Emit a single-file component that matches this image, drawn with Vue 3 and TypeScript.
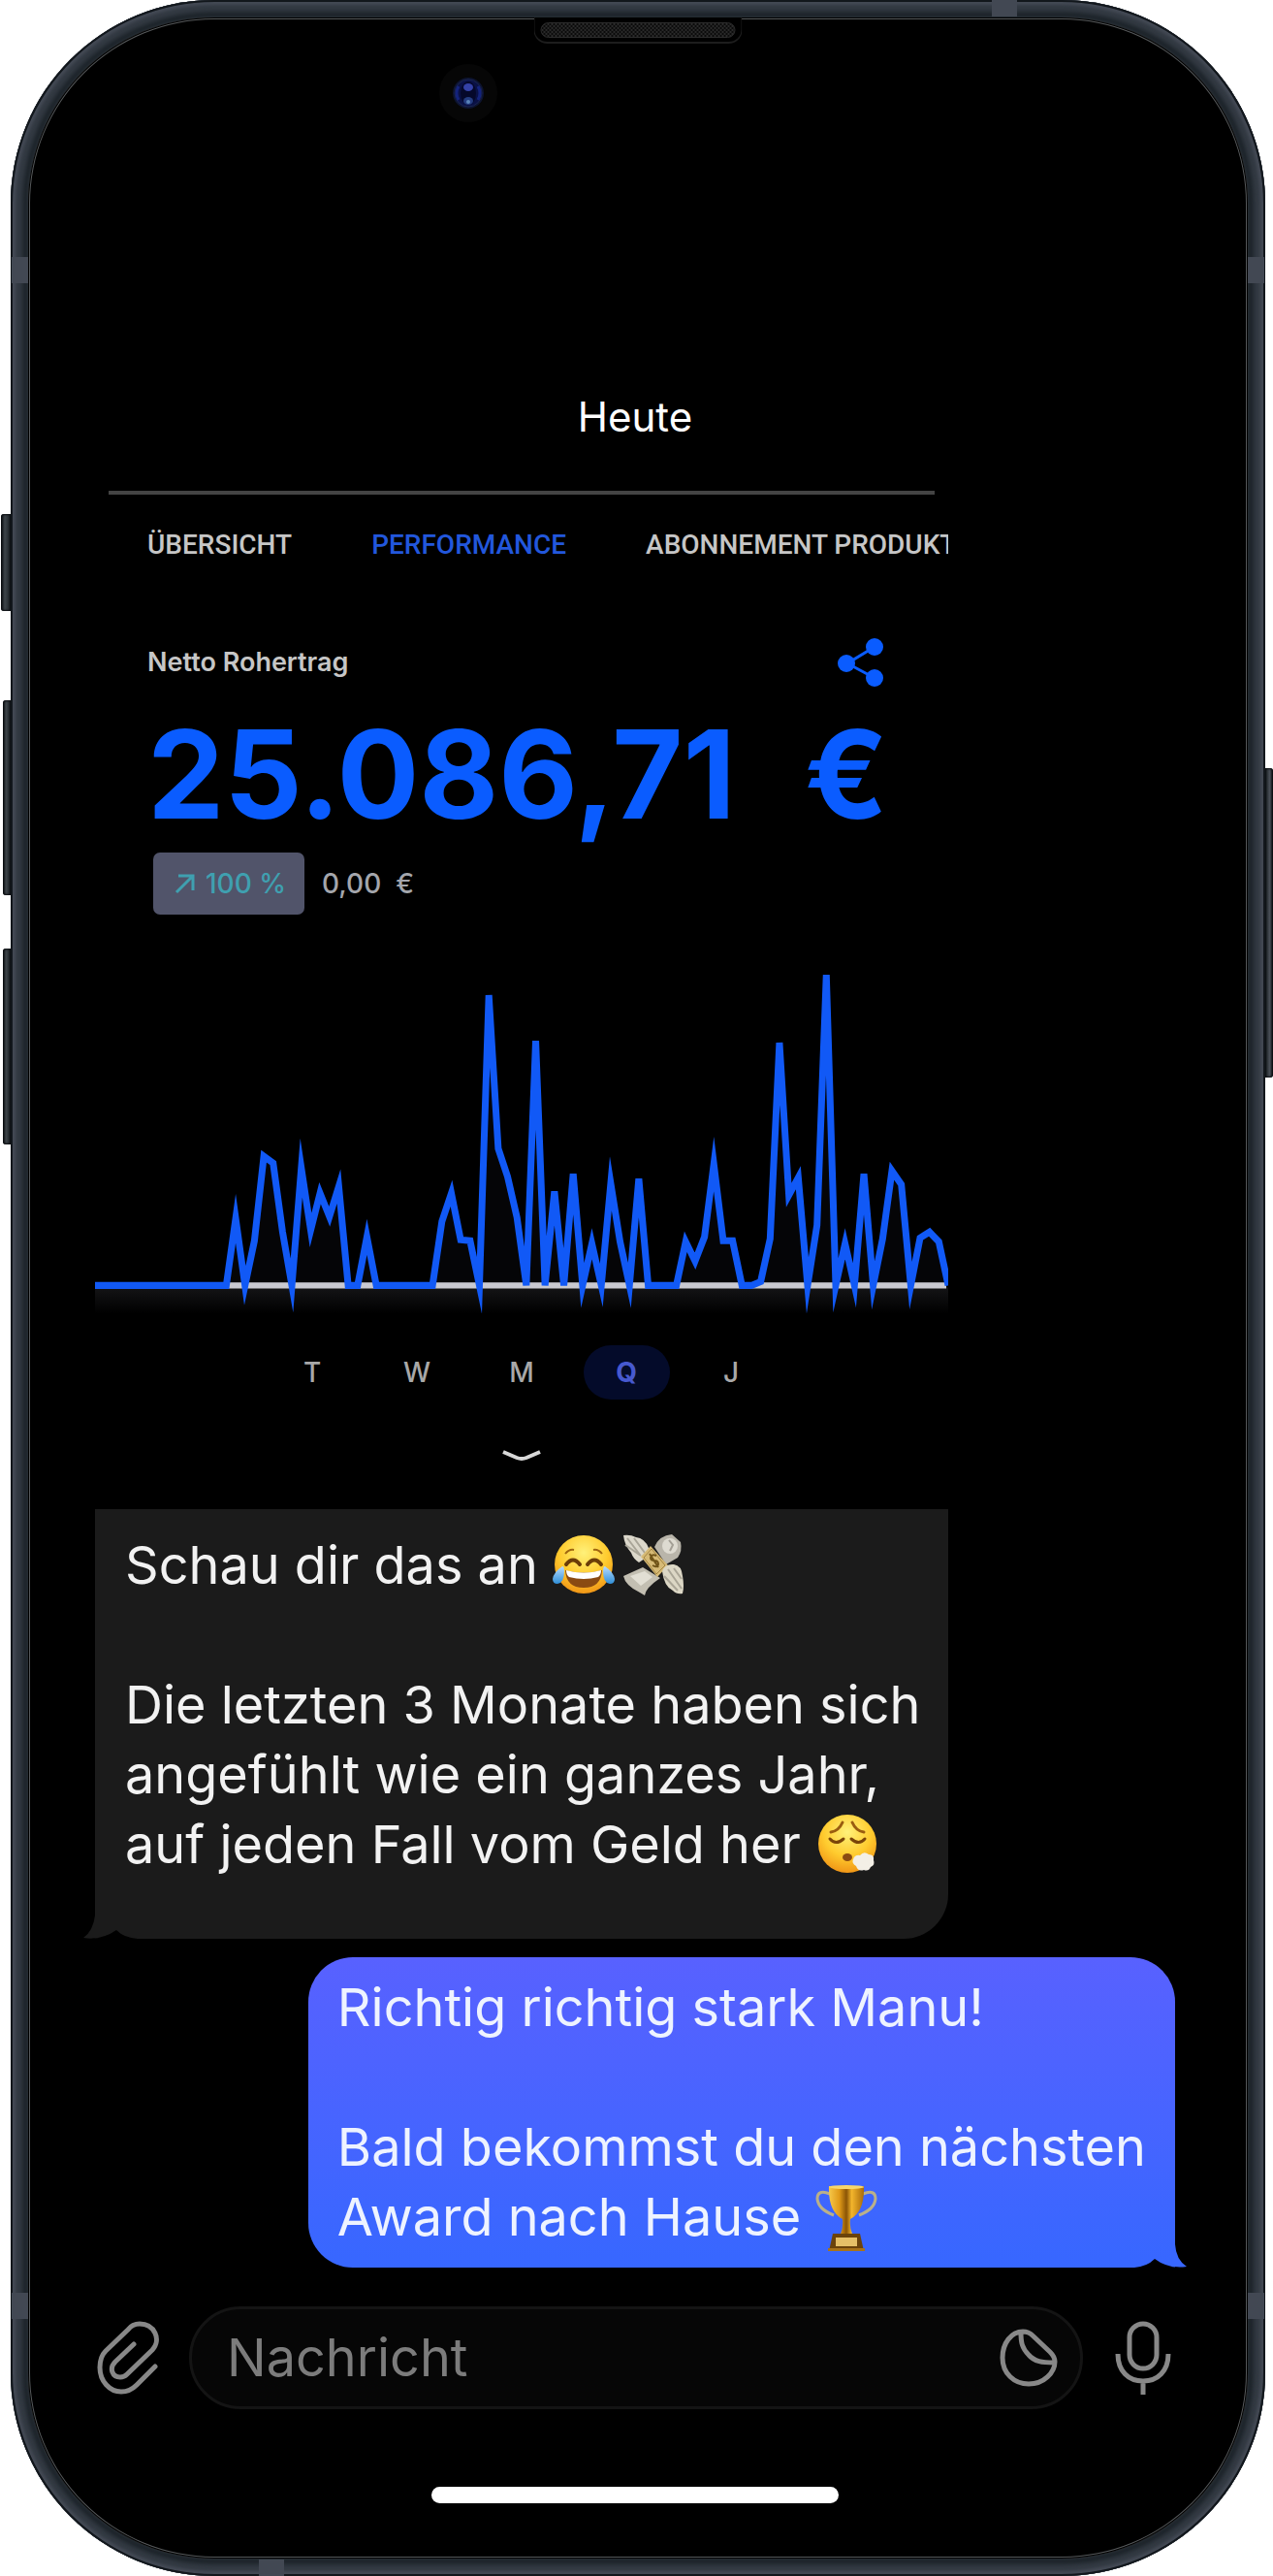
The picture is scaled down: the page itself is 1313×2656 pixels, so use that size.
<script setup lang="ts">
import { computed, ref } from 'vue'

const tabs = ['ÜBERSICHT', 'PERFORMANCE', 'ABONNEMENT PRODUKT']
const activeTab = ref('PERFORMANCE')

const periods = ['T', 'W', 'M', 'Q', 'J']
const activePeriod = ref('Q')

const draft = ref('')

// Daily gross profit over one quarter, in chart units above the zero line
const days: number[] = [
  0, 0, 0, 0, 0, 0, 0, 0, 0, 0, 0, 0, 0, 0, 0, 69, 0, 46, 133, 126, 55, 0, 121, 57, 95, 71, 102, 0, 0, 50,
  0, 0, 0, 0, 0, 0, 0, 66, 95, 47, 46, 0, 299, 141, 112, 70, 0, 252, 0, 97, 0, 115, 0, 43, 0, 105, 45, 0,
  110, 0, 0, 0, 0, 45, 25, 50, 125, 46, 46, 0, 0, 4, 48, 250, 93, 111, 0, 62, 320, 0, 43, 0, 115, 0, 48,
  118, 104, 0, 49, 55, 45, 0,
]
const chartWidth = 879
const zeroLine = 325

const linePoints = computed(() =>
  days.map((v, i) => `${((i * chartWidth) / (days.length - 1)).toFixed(1)},${zeroLine - v}`).join(' '),
)
</script>

<template>
  <main class="stage">
    <div class="phone">
      <i class="key key-mute"></i>
      <i class="key key-up"></i>
      <i class="key key-down"></i>
      <i class="key key-power"></i>
      <i class="band band-lt"></i>
      <i class="band band-rt"></i>
      <i class="band band-lb"></i>
      <i class="band band-rb"></i>
      <i class="band band-top"></i>
      <i class="band band-bottom"></i>

      <div class="screen">
        <div class="speaker"><i class="grille"></i></div>
        <svg class="camera" viewBox="0 0 60 60" aria-hidden="true">
          <circle cx="30" cy="30" r="30" fill="#060606" />
          <circle cx="30" cy="30" r="16" fill="#0d1430" />
          <circle cx="30" cy="30" r="14" fill="#0a1145" stroke="#1a2450" stroke-width="1" />
          <ellipse cx="30" cy="30" rx="8" ry="12" fill="#05082a" />
          <path d="M20 23q-4 7 0 14M40 23q4 7 0 14" stroke="#14237c" stroke-width="3" fill="none" />
          <ellipse cx="30" cy="24" rx="5" ry="4" fill="#3441a6" />
          <ellipse cx="30" cy="38" rx="5" ry="4" fill="#243c80" />
          <circle cx="30" cy="39" r="2" fill="#5a83b8" />
        </svg>

        <h1 class="day">Heute</h1>

        <section class="card">
          <hr class="rule" />
          <nav class="tabs">
            <button
              v-for="tab in tabs"
              :key="tab"
              type="button"
              class="tab"
              :class="{ active: tab === activeTab }"
              @click="activeTab = tab"
            >{{ tab }}</button>
          </nav>

          <div class="metric-head">
            <h2>Netto Rohertrag</h2>
            <button type="button" class="icon-button" aria-label="Teilen">
              <svg class="share" viewBox="0 0 48 52">
                <path d="M38 10 10 27 38 42" fill="none" stroke="#0a5cff" stroke-width="3" />
                <circle cx="38" cy="10" r="9" fill="#0a5cff" />
                <circle cx="9" cy="27" r="9" fill="#0a5cff" />
                <circle cx="38" cy="42" r="9" fill="#0a5cff" />
              </svg>
            </button>
          </div>
          <p class="amount"><span>25.086,71</span> <span>€</span></p>
          <div class="delta">
            <span class="badge">
              <svg class="arrow" viewBox="0 0 22 22" aria-hidden="true">
                <path d="M2 20 19 3M4 3h15v15" fill="none" stroke="#3fa0b0" stroke-width="3" />
              </svg>
              100 %
            </span>
            <span class="change">0,00&nbsp; €</span>
          </div>

          <svg class="chart" viewBox="0 0 879 354" role="img" aria-label="Rohertrag im Quartal">
            <defs>
              <linearGradient id="fade" x1="0" y1="0" x2="0" y2="1">
                <stop offset="0" stop-color="#141416" />
                <stop offset="1" stop-color="#000" />
              </linearGradient>
            </defs>
            <polygon :points="linePoints" fill="#050507" />
            <rect x="0" y="327" width="879" height="27" fill="url(#fade)" />
            <path d="M0 325H877" stroke="#c9c9d0" stroke-width="6" />
            <polyline :points="linePoints" fill="none" stroke="#1159f6" stroke-width="7" stroke-miterlimit="10" />
          </svg>

          <div class="periods">
            <button
              v-for="p in periods"
              :key="p"
              type="button"
              class="period"
              :class="{ active: p === activePeriod }"
              @click="activePeriod = p"
            >{{ p }}</button>
          </div>
          <button type="button" class="more" aria-label="Mehr anzeigen">
            <svg class="chevron" viewBox="0 0 42 16">
              <path d="M2 3 16 9Q21 11 26 9L40 3" fill="none" stroke="#d8d8d8" stroke-width="4" />
            </svg>
          </button>
        </section>

        <article class="bubble incoming">
          <p>
            Schau dir das an
            <svg class="emoji" viewBox="0 0 64 64" role="img" aria-label="Freudentränen">
              <defs>
                <radialGradient id="face" cx=".5" cy=".3" r=".75">
                  <stop offset="0" stop-color="#fff17a" />
                  <stop offset=".55" stop-color="#ffcb2e" />
                  <stop offset="1" stop-color="#ee8d12" />
                </radialGradient>
                <linearGradient id="tear" x1="0" y1="0" x2="0" y2="1">
                  <stop offset="0" stop-color="#b8dcff" />
                  <stop offset="1" stop-color="#2f8fd8" />
                </linearGradient>
              </defs>
              <circle cx="32" cy="32" r="30" fill="url(#face)" />
              <path d="M13 21q4-5 9-4M51 21q-4-5-9-4" stroke="#a0660f" stroke-width="2" fill="none" />
              <path d="M14 32q7-9 14 0M36 32q7-9 14 0" stroke="#6b3d08" stroke-width="4" fill="none" stroke-linecap="round" />
              <path d="M13 38q19 5 38 0-1 18-19 18T13 38Z" fill="#8a4a12" />
              <path d="M14 38q18 5 36 0 0 5-3 7-15 4-30 0-3-2-3-7Z" fill="#fff" />
              <path d="M10 34q2 0 2 5 0 12-7 13-5 0-5-5 1-7 10-13ZM54 34q-2 0-2 5 0 12 7 13 5 0 5-5-1-7-10-13Z" fill="url(#tear)" />
            </svg>
            <svg class="emoji next" viewBox="0 0 64 64" role="img" aria-label="Geld mit Flügeln">
              <path d="M33 14Q38 2 51 1l9 8q2 9-3 16l-12 7Z" fill="#b9b5aa" />
              <circle cx="49" cy="13" r="8" fill="#dedbd1" />
              <path d="M48 7l4 5-3 6" fill="none" stroke="#a39f95" stroke-width="2" />
              <path d="M1 2q7-1 13 2 9 1 13 11l2 7-12 8q-6-4-8-10Q2 12 1 2Z" fill="#dcd8cb" />
              <path d="M5 5l13 17M12 5l11 15M3 12l16 11" stroke="#a9a598" stroke-width="2" />
              <path d="M21 35 1 44q2 10 17 17l5 3q1-8 16-18Z" fill="#c3bfb2" />
              <path d="M8 44l15-5 8 6-12 9Z" fill="#e2dfd4" />
              <path d="M19 24 29 13 47 33 36 45Z" fill="#d6ba76" />
              <path d="m22 25 8-9 14 17-9 9Z" fill="none" stroke="#a58642" stroke-width="1" />
              <path d="M35 23q-5-2-6 2 0 3 4 3t4 4q-1 4-6 1M28 21l9 14" fill="none" stroke="#705418" stroke-width="2" />
              <path d="M41 39q3-8 12-7 8 1 9 12 2 11 0 18-6 1-10-3-9-4-11-20Z" fill="#dcd7c5" />
              <path d="M47 37l14 20M53 36l8 11M43 44l14 15" stroke="#aaa596" stroke-width="2" />
            </svg>
            <br /><br />
            Die letzten 3 Monate haben sich<br />
            angefühlt wie ein ganzes Jahr,<br />
            auf jeden Fall vom Geld her
            <svg class="emoji" viewBox="0 0 64 64" role="img" aria-label="Ausatmen">
              <circle cx="33" cy="32" r="30" fill="url(#face)" />
              <path d="M16 20q8-1 12-10M50 20q-8-1-12-10" stroke="#9a5d10" stroke-width="3" fill="none" stroke-linecap="round" />
              <path d="M15 27q6 7 14 0M37 27q8 7 14 0" stroke="#7a4509" stroke-width="3" fill="none" stroke-linecap="round" />
              <ellipse cx="33" cy="46" rx="5" ry="4" fill="#8a4a12" />
              <path d="M39 48q2-5 7-4 4-5 9-1 6 0 5 6 2 5-3 7-2 5-7 3-6 2-8-4-5-3-3-7Z" fill="#f3efe6" />
            </svg>
          </p>
          <svg class="tail tail-left" viewBox="0 0 56 44" aria-hidden="true">
            <path d="M0 43Q10 36 12 20V44H34V35Q20 46 0 43Z" fill="#1b1b1b" />
            <path d="M0 44Q20 45 34 35 42 43 56 44Z" fill="#000" />
          </svg>
        </article>

        <article class="bubble outgoing">
          <p>
            Richtig richtig stark Manu!<br /><br />
            Bald bekommst du den nächsten<br />
            Award nach Hause
            <svg class="emoji trophy" viewBox="0 0 64 68" role="img" aria-label="Pokal">
              <defs>
                <linearGradient id="gold" x1="0" y1="0" x2="1" y2="0">
                  <stop offset="0" stop-color="#f6c84a" />
                  <stop offset=".3" stop-color="#e09a18" />
                  <stop offset=".5" stop-color="#8a5406" />
                  <stop offset=".65" stop-color="#f3b52c" />
                  <stop offset="1" stop-color="#a86a0a" />
                </linearGradient>
              </defs>
              <path d="M15 9Q2 4 2 14q1 11 17 17M49 9q13-5 13 5-1 11-17 17" fill="none" stroke="#b9b08a" stroke-width="3" />
              <path d="M14 1h36q1 26-14 34-1 8 2 15H26q3-7 2-15Q13 27 14 1Z" fill="url(#gold)" />
              <ellipse cx="32" cy="2" rx="18" ry="2" fill="#f8d76a" />
              <path d="M18 50h28l4 18H14Z" fill="#6b430b" />
              <path d="M21 54h22v9H21Z" fill="#e6c067" />
              <path d="M13 65h38v3H13Z" fill="#a8731a" />
            </svg>
          </p>
          <svg class="tail tail-right" viewBox="0 0 54 44" aria-hidden="true">
            <path d="M54 43Q43 36 42 20V44H21V34Q34 46 54 43Z" fill="#3867ff" />
            <path d="M54 44Q34 45 21 35 13 43 0 44Z" fill="#000" />
          </svg>
        </article>

        <form class="composer" @submit.prevent>
          <button type="button" class="icon-button" aria-label="Anhang">
            <svg class="clip" viewBox="0 0 64 76">
              <path
                d="M38 24 19 42C12 49 16 58 24 58c3 0 5-1 7-3L57 30C67 19 59 3 44 3c-5 0-9 2-12 6L9 31C5 35 3 41 3 48 3 62 13 73 25 73 31 73 36 71 41 66L60 47"
                fill="none" stroke="#888" stroke-width="5" stroke-linecap="round" stroke-linejoin="round"
              />
            </svg>
          </button>
          <div class="field">
            <input v-model="draft" type="text" placeholder="Nachricht" aria-label="Nachricht" />
            <button type="button" class="icon-button" aria-label="Sticker">
              <svg class="sticker" viewBox="0 0 60 60">
                <path
                  d="M24 3C12 3 3 15 3 30c0 16 12 27 27 27 16 0 27-12 27-23 0-4-2-7-5-10L34 7c-3-3-6-4-10-4ZM22 4c0 10 1 16 8 23 6 7 14 8 26 8"
                  fill="none" stroke="#888" stroke-width="5" stroke-linejoin="round"
                />
              </svg>
            </button>
          </div>
          <button type="button" class="icon-button" aria-label="Sprachnachricht">
            <svg class="mic" viewBox="0 0 58 76">
              <rect x="15" y="3" width="28" height="46" rx="14" fill="none" stroke="#888" stroke-width="5" />
              <path d="M3 34c0 18 11 28 26 28s26-10 26-28M29 62v14" fill="none" stroke="#888" stroke-width="5" />
            </svg>
          </button>
        </form>

        <div class="home-bar"></div>
      </div>
    </div>
  </main>
</template>

<style>
body {
  margin: 0;
  background: #fff;
}
</style>

<style scoped>
* {
  box-sizing: border-box;
}

h1,
h2,
p,
hr {
  margin: 0;
  border: 0;
  font-weight: 400;
}

button {
  padding: 0;
  border: 0;
  background: none;
  color: inherit;
  font: inherit;
  cursor: pointer;
}

svg {
  display: block;
}

.stage {
  padding: 0 8px 0 11px;
  font-family: Inter, "Liberation Sans", sans-serif;
  color: #fff;
}

.phone {
  position: relative;
  padding: 18px;
  border-radius: 210px;
  background: #2b3239;
  box-shadow:
    inset 0 0 0 2px #12171c,
    inset 0 0 3px 5px #434954,
    inset 0 0 5px 12px #343b44,
    inset 0 0 3px 17px #1c2329;
}

.key {
  position: absolute;
  left: -8px;
  width: 8px;
  border-radius: 3px 0 0 3px;
  background: linear-gradient(90deg, #0c1013, #3d4449 40%, #1c2226);
  box-shadow: inset 0 0 2px 1px #0a0d10;
}

.key-mute {
  top: 530px;
  left: -10px;
  width: 10px;
  height: 100px;
}

.key-up {
  top: 722px;
  height: 201px;
}

.key-down {
  top: 978px;
  height: 202px;
}

.key-power {
  top: 792px;
  right: -8px;
  left: auto;
  height: 319px;
  border-radius: 0 3px 3px 0;
  background: linear-gradient(270deg, #0c1013, #4a5058 40%, #1c2226);
}

.band {
  position: absolute;
  width: 17px;
  height: 27px;
  background: #424853;
}

.band-lt {
  top: 265px;
  left: 1px;
}

.band-rt {
  top: 265px;
  right: 1px;
}

.band-lb {
  bottom: 265px;
  left: 1px;
}

.band-rb {
  right: 1px;
  bottom: 265px;
}

.band-top {
  top: 0;
  right: 256px;
  width: 26px;
  height: 17px;
}

.band-bottom {
  bottom: 0;
  left: 256px;
  width: 26px;
  height: 17px;
}

.screen {
  position: relative;
  display: flex;
  flex-direction: column;
  padding: 388px 75px 57px 69px;
  border-radius: 192px;
  background: #000;
  box-shadow:
    inset 0 0 0 1px #000,
    inset 0 0 0 2px #55585a;
}

.speaker {
  position: absolute;
  top: 0;
  left: 50%;
  width: 215px;
  height: 27px;
  padding: 5px 6px;
  border: solid #1d1d1d;
  border-width: 0 1px 2px;
  border-radius: 0 0 14px 14px;
  background: #000;
  transform: translateX(-50%);
}

.grille {
  display: block;
  height: 16px;
  border: 1px solid #2c2c2c;
  border-radius: 8px;
  background: repeating-conic-gradient(#2a2a2a 0 25%, #0b0b0b 0 50%) 0 0 / 4px 4px;
}

.camera {
  position: absolute;
  top: 48px;
  left: 424px;
  width: 60px;
  height: 60px;
}

.day {
  font-size: 42px;
  line-height: 48px;
  text-align: center;
}

.card {
  width: 79%;
  margin-top: 52px;
  overflow: hidden;
}

.rule {
  height: 4px;
  margin: 0 14px;
  background: #444;
}

.tabs {
  display: flex;
  gap: 82px;
  margin-top: 34px;
  padding-left: 54px;
}

.tab {
  flex: none;
  font-family: Roboto, "Noto Sans", sans-serif;
  font-size: 28px;
  font-weight: 500;
  line-height: 36px;
  color: #c6c6c6;
  white-space: nowrap;
}

.tab.active {
  color: #2257dc;
}

.metric-head {
  display: flex;
  align-items: center;
  justify-content: space-between;
  margin-top: 77px;
  padding: 0 66px 0 54px;
}

.metric-head h2 {
  font-size: 27px;
  font-weight: 600;
  line-height: 36px;
  color: #c6c6c6;
}

.share {
  width: 48px;
  height: 52px;
}

.amount {
  display: flex;
  justify-content: space-between;
  margin-top: 24px;
  padding: 0 62px 0 54px;
  font-size: 126px;
  font-weight: 700;
  line-height: 130px;
  color: #0a5cff;
  white-space: nowrap;
}

.delta {
  display: flex;
  gap: 18px;
  align-items: center;
  margin-top: 16px;
  padding-left: 60px;
  font-size: 28px;
  font-weight: 500;
  line-height: 64px;
}

.badge {
  display: flex;
  gap: 10px;
  align-items: center;
  padding: 0 19px 0 22px;
  border-radius: 7px;
  background: #51546a;
  color: #3fa0b0;
}

.arrow {
  width: 22px;
  height: 22px;
}

.change {
  color: #a4a6ac;
}

.chart {
  width: 100%;
  height: auto;
  margin-top: 57px;
}

.periods {
  display: flex;
  gap: 19px;
  justify-content: center;
  margin-top: 33px;
}

.period {
  width: 89px;
  border-radius: 28px;
  color: #a8a8a8;
  font-size: 28px;
  font-weight: 500;
  line-height: 56px;
  text-align: center;
}

.period.active {
  background: #040b2a;
  color: #4759cf;
  font-weight: 700;
}

.more {
  display: block;
  margin: 51px auto 0;
}

.chevron {
  width: 42px;
  height: 16px;
}

.bubble {
  position: relative;
  font-size: 54px;
  line-height: 72px;
  white-space: nowrap;
}

.incoming {
  width: 79%;
  margin-top: 46px;
  padding: 22px 31px 61px;
  border-radius: 0 0 46px 0;
  background: #1b1b1b;
  color: #f2f2f2;
}

.outgoing {
  align-self: flex-end;
  margin-top: 19px;
  padding: 16px 30px;
  border-radius: 46px 46px 0 46px;
  background: linear-gradient(#5861ff, #3767ff);
  color: #eef3ff;
}

.emoji {
  display: inline-block;
  width: 64px;
  height: 64px;
  vertical-align: -12px;
}

.emoji.next {
  margin-left: 8px;
}

.emoji.trophy {
  height: 68px;
  margin: -4px 0;
}

.tail {
  position: absolute;
  bottom: 0;
  height: 44px;
}

.tail-left {
  left: -12px;
  width: 56px;
}

.tail-right {
  right: -12px;
  width: 54px;
}

.composer {
  display: flex;
  align-items: center;
  justify-content: space-between;
  margin-top: 40px;
  padding: 0 4px 0 2px;
}

.clip {
  width: 64px;
  height: 76px;
}

.field {
  display: flex;
  flex: 1;
  align-items: center;
  min-width: 0;
  height: 106px;
  margin: 0 33px 0 31px;
  padding: 0 23px 0 36px;
  border: 3px solid #141414;
  border-radius: 53px;
  background: #060606;
}

.field input {
  flex: 1;
  min-width: 0;
  padding: 0;
  border: 0;
  outline: 0;
  background: none;
  color: #eee;
  font: inherit;
  font-size: 54px;
  line-height: 72px;
}

.field input::placeholder {
  color: #7c7c7c;
  opacity: 1;
}

.sticker {
  width: 60px;
  height: 60px;
}

.mic {
  width: 58px;
  height: 76px;
}

.home-bar {
  align-self: center;
  width: 420px;
  max-width: 60%;
  height: 17px;
  margin-top: 80px;
  border-radius: 9px;
  background: #fff;
}
</style>
